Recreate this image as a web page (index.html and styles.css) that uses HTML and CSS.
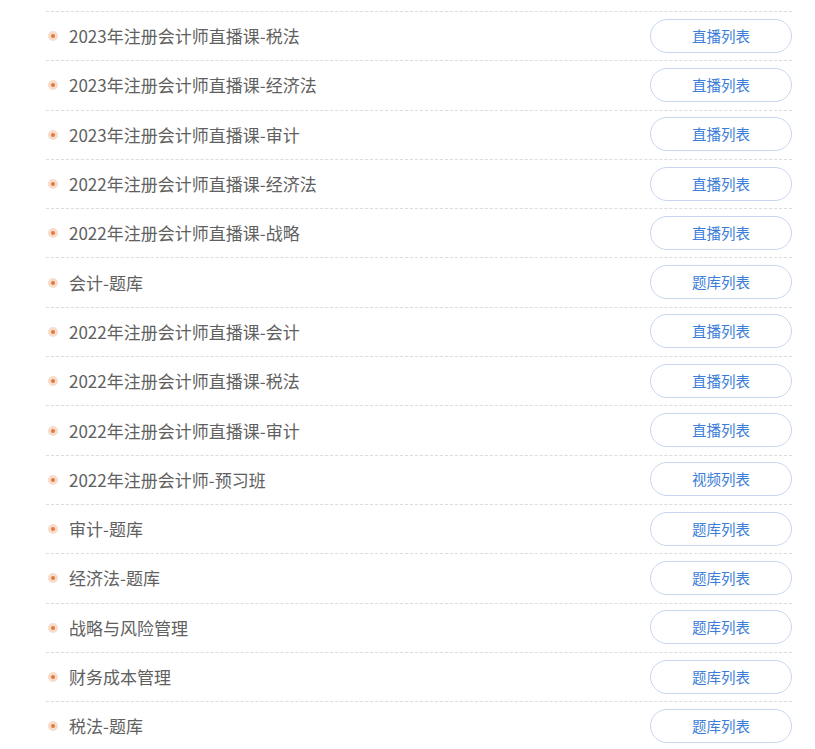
FILE: index.html
```html
<!DOCTYPE html>
<html lang="zh-CN">
  <head>
    <meta charset="UTF-8" />
    <meta name="viewport" content="width=device-width, initial-scale=1.0" />
    <title>课程列表</title>
    <link rel="stylesheet" href="styles.css">
  </head>
  <body>
    <ul class="course-list">
      <li class="course"><span class="dot"></span><span class="name">2023年注册会计师直播课-税法</span><a class="btn" href="#">直播列表</a></li>
      <li class="course"><span class="dot"></span><span class="name">2023年注册会计师直播课-经济法</span><a class="btn" href="#">直播列表</a></li>
      <li class="course"><span class="dot"></span><span class="name">2023年注册会计师直播课-审计</span><a class="btn" href="#">直播列表</a></li>
      <li class="course"><span class="dot"></span><span class="name">2022年注册会计师直播课-经济法</span><a class="btn" href="#">直播列表</a></li>
      <li class="course"><span class="dot"></span><span class="name">2022年注册会计师直播课-战略</span><a class="btn" href="#">直播列表</a></li>
      <li class="course"><span class="dot"></span><span class="name">会计-题库</span><a class="btn" href="#">题库列表</a></li>
      <li class="course"><span class="dot"></span><span class="name">2022年注册会计师直播课-会计</span><a class="btn" href="#">直播列表</a></li>
      <li class="course"><span class="dot"></span><span class="name">2022年注册会计师直播课-税法</span><a class="btn" href="#">直播列表</a></li>
      <li class="course"><span class="dot"></span><span class="name">2022年注册会计师直播课-审计</span><a class="btn" href="#">直播列表</a></li>
      <li class="course"><span class="dot"></span><span class="name">2022年注册会计师-预习班</span><a class="btn" href="#">视频列表</a></li>
      <li class="course"><span class="dot"></span><span class="name">审计-题库</span><a class="btn" href="#">题库列表</a></li>
      <li class="course"><span class="dot"></span><span class="name">经济法-题库</span><a class="btn" href="#">题库列表</a></li>
      <li class="course"><span class="dot"></span><span class="name">战略与风险管理</span><a class="btn" href="#">题库列表</a></li>
      <li class="course"><span class="dot"></span><span class="name">财务成本管理</span><a class="btn" href="#">题库列表</a></li>
      <li class="course"><span class="dot"></span><span class="name">税法-题库</span><a class="btn" href="#">题库列表</a></li>
    </ul>
  </body>
</html>
```

FILE: styles.css
```css
body {
  margin: 0;
  padding: 0;
  background-color: #fff;
  font-family: "Noto Sans CJK SC", "Noto Sans", sans-serif;
  color: #666;
  overflow: hidden;
}

.course-list {
  list-style: none;
  margin: 0;
  padding: 11px 23px 0 46px;
}

.course {
  display: flex;
  align-items: center;
  box-sizing: border-box;
  height: 49.3px;
  border-top: 1px dashed #dcdcdc;
}

.dot {
  box-sizing: border-box;
  width: 10px;
  height: 10px;
  margin: 0 11px 0 2px;
  border-radius: 50%;
  background-color: #e27a3c;
  border: 3px solid #f6dccb;
  flex-shrink: 0;
}

.name {
  flex: 1;
  font-size: 17px;
  line-height: 1;
  margin-bottom: 1px;
  color: #606060;
}

.btn {
  box-sizing: border-box;
  width: 142px;
  height: 34px;
  line-height: 32px;
  border: 1px solid #c8d7ef;
  border-radius: 17px;
  text-align: center;
  font-size: 14.5px;
  color: #3b7dd8;
  text-decoration: none;
  margin-bottom: 1px;
}
```
